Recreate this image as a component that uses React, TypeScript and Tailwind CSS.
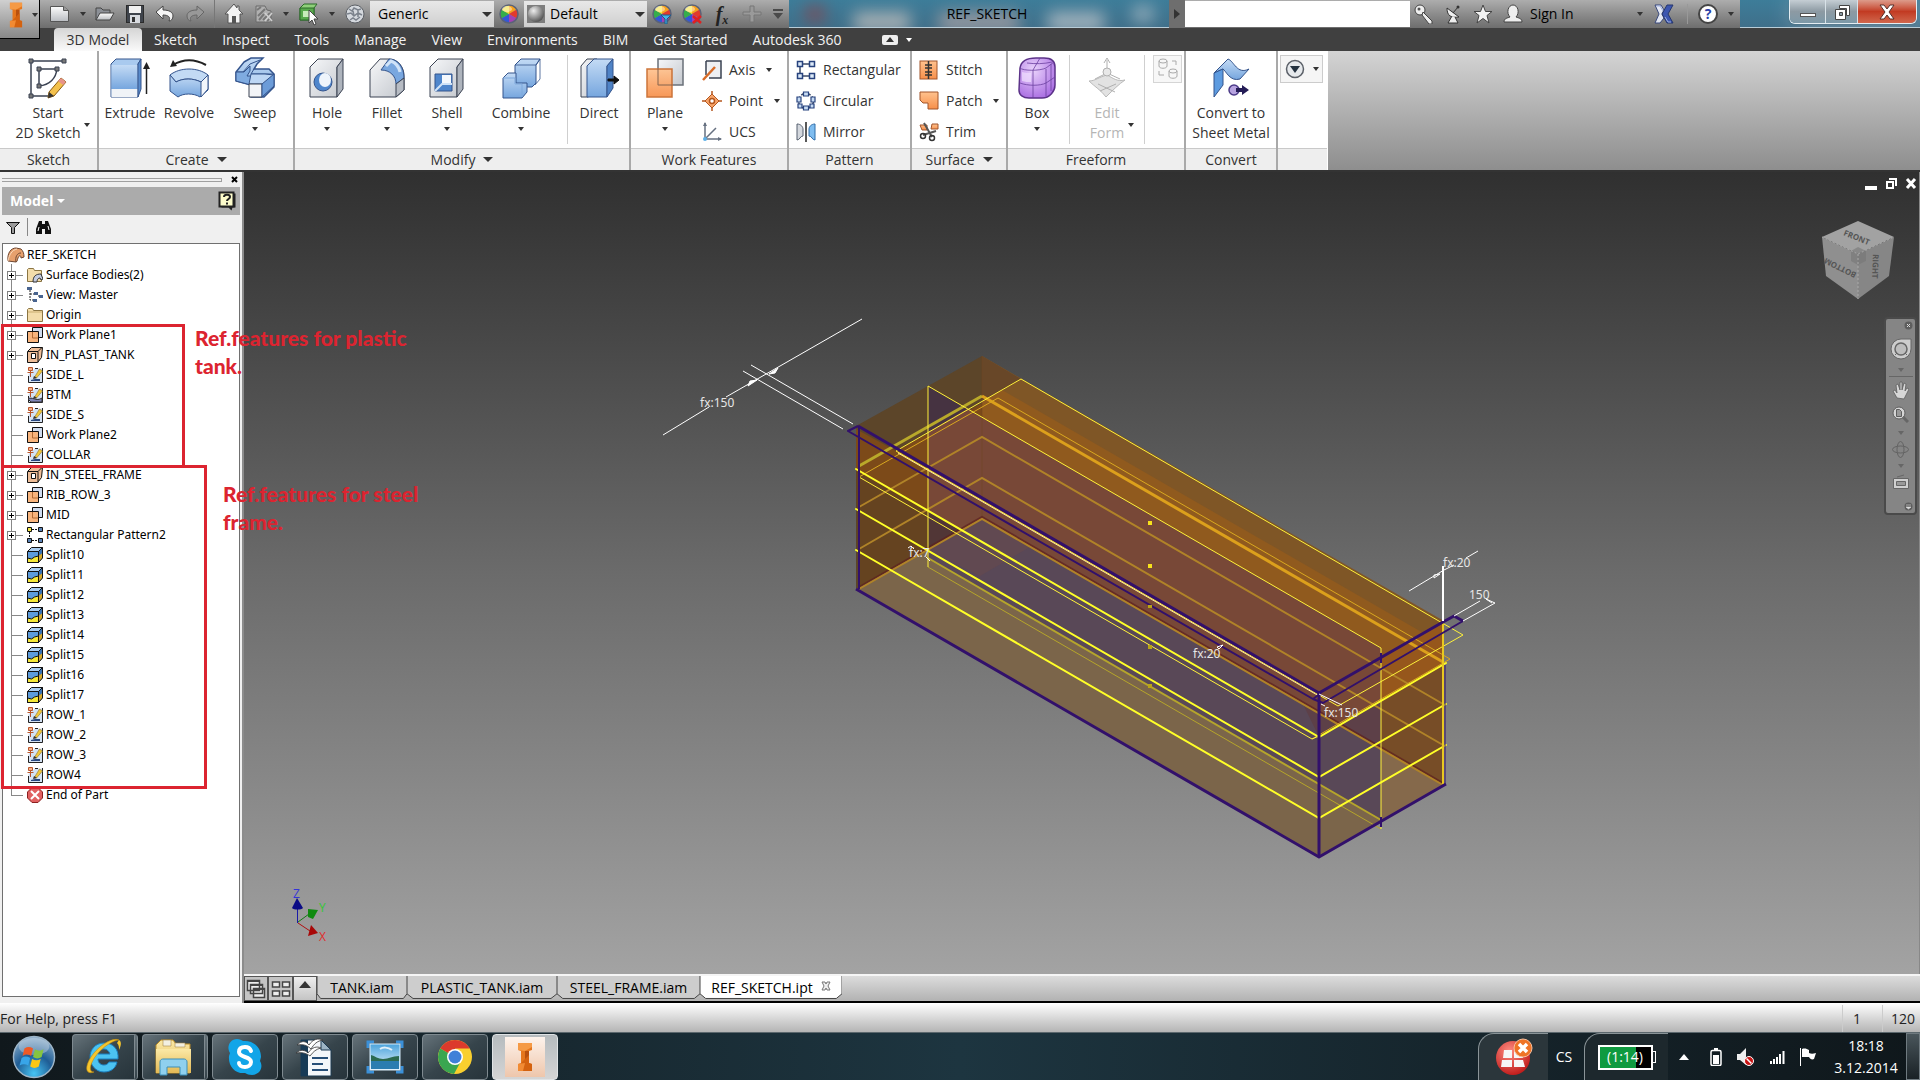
import React from "react";

type P = { children?: React.ReactNode };

const Caret = ({ c = "border-t-[#333]", big = false }: { c?: string; big?: boolean }) =>
  big ? (
    <span className={"block h-0 w-0 shrink-0 border-x-[5px] border-t-[5px] border-x-transparent " + c} />
  ) : (
    <span className={"block h-0 w-0 shrink-0 border-x-[3px] border-t-4 border-x-transparent " + c} />
  );

const Icon = ({ w = 20, h = 20, box, children }: P & { w?: number; h?: number; box?: string }) => (
  <svg width={w} height={h} viewBox={box ?? `0 0 ${w} ${h}`} fill="none" aria-hidden="true" className="shrink-0">
    {children}
  </svg>
);

/* ---------- Shared gradients ---------- */
const Defs = () => (
  <svg width="0" height="0" className="absolute" aria-hidden="true">
    <defs>
      <linearGradient id="blue" x1="0" y1="0" x2="0" y2="1">
        <stop offset="0" stopColor="#c4dbf5" />
        <stop offset="1" stopColor="#76a6de" />
      </linearGradient>
      <linearGradient id="grey" x1="0" y1="0" x2="1" y2="1">
        <stop offset="0" stopColor="#f6f7f9" />
        <stop offset="1" stopColor="#c3c7cd" />
      </linearGradient>
      <linearGradient id="orange" x1="0" y1="0" x2="0" y2="1">
        <stop offset="0" stopColor="#ffc28e" />
        <stop offset="1" stopColor="#f78f4a" />
      </linearGradient>
      <linearGradient id="silver" x1="0" y1="0" x2="0" y2="1">
        <stop offset="0" stopColor="#fdfdfd" />
        <stop offset="1" stopColor="#b9bcc1" />
      </linearGradient>
      <linearGradient id="folder" x1="0" y1="0" x2="0" y2="1">
        <stop offset="0" stopColor="#fbe9a6" />
        <stop offset="1" stopColor="#e3b955" />
      </linearGradient>
      <linearGradient id="sky" x1="0" y1="0" x2="0" y2="1">
        <stop offset="0" stopColor="#4aa3dc" />
        <stop offset="1" stopColor="#eaf6fc" />
      </linearGradient>
      <radialGradient id="ball" cx=".35" cy=".3" r=".8">
        <stop offset="0" stopColor="#ededed" />
        <stop offset=".6" stopColor="#8a8a8a" />
        <stop offset="1" stopColor="#444" />
      </radialGradient>
      <radialGradient id="orb" cx=".5" cy=".9" r=".9">
        <stop offset="0" stopColor="#46c4f4" />
        <stop offset=".5" stopColor="#1f5d95" />
        <stop offset="1" stopColor="#8fb0cc" />
      </radialGradient>
      <radialGradient id="purple" cx=".4" cy=".3" r=".8">
        <stop offset="0" stopColor="#e9d2fb" />
        <stop offset="1" stopColor="#a566e0" />
      </radialGradient>
      <radialGradient id="red" cx=".4" cy=".3" r=".8">
        <stop offset="0" stopColor="#ff8b80" />
        <stop offset="1" stopColor="#b80f0f" />
      </radialGradient>
    </defs>
  </svg>
);

/* ---------- Title bar icons ---------- */
const ILogo = ({ w, h }: { w: number; h: number }) => (
  <Icon w={w} h={h} box="2 0 16 30">
    <path d="M3 1h14v7l-3 1v12l3 1v7H3v-7l3-1V9L3 8z" fill="#e5761c" />
    <path d="M3 1h14v4l-7 4-7-1z" fill="#f59a45" />
    <path d="M10 9l4 0v12l-4 4z" fill="#b8500e" />
    <path d="M6 21l8-8v8l3 1v7H8z" fill="#d4620f" />
    <path d="M3 22l7-1-2 8H3z" fill="#f28b33" />
  </Icon>
);

const Wheel = ({ extra }: { extra?: React.ReactNode }) => (
  <Icon w={20} h={20}>
    <path d="M10 10V1a9 9 0 0 1 7.8 4.5z" fill="#f7a11c" />
    <path d="M10 10l7.8-4.5a9 9 0 0 1 0 9z" fill="#e33a2c" />
    <path d="M10 10l7.8 4.5A9 9 0 0 1 10 19z" fill="#a341b3" />
    <path d="M10 10v9a9 9 0 0 1-7.8-4.5z" fill="#3457d6" />
    <path d="M10 10l-7.8 4.5a9 9 0 0 1 0-9z" fill="#35ad4b" />
    <path d="M10 10L2.200 5.500A9 9 0 0 1 10 1z" fill="#f4e03a" />
    <circle cx="10" cy="10" r="9" stroke="#5b6378" strokeWidth="1.500" />
    <ellipse cx="8" cy="5" rx="5" ry="3" fill="#fff" opacity=".45" />
    {extra}
  </Icon>
);

const TIcon = ({ label, children, w = "w-[30px]" }: P & { label: string; w?: string }) => (
  <button type="button" aria-label={label} className={"flex h-full shrink-0 items-center justify-center " + w}>
    {children}
  </button>
);

const Glass = ({ children, cls }: P & { cls: string }) => (
  <div
    className={
      "relative h-full overflow-hidden border-b border-[#b9cdd8] bg-linear-to-b from-[#3d7d99] to-[#3f6f8a] " + cls
    }
  >
    {children}
  </div>
);

function TitleBar() {
  return (
    <header className="relative flex h-7 shrink-0 bg-linear-to-b from-[#adadad] via-[#8c8c8c] to-[#6e6e6e] text-sm">
      <button
        type="button"
        aria-label="Application menu"
        className="absolute left-0 top-0 z-10 flex h-[39px] w-10 items-center gap-2 border-b border-r border-black bg-linear-to-b from-[#d0d0d0] to-[#888] pb-2 pl-2"
      >
        <ILogo w={16} h={26} />
        <Caret />
      </button>
      <div className="flex pl-[44px]">
        <TIcon label="New" w="w-8">
          <Icon w={22} h={20}>
            <path d="M1.500 2.500h13l5 4v11h-18z" fill="url(#silver)" stroke="#555" />
            <path d="M14.500 2.500v4h5" fill="#999" stroke="#555" />
          </Icon>
        </TIcon>
        <TIcon label="New options" w="w-3.5"><Caret /></TIcon>
        <TIcon label="Open">
          <Icon w={20} h={20}>
            <path d="M1 16V4h5l2 2h7v3" fill="#8c9097" stroke="#444" />
            <path d="M1 16l4-7h14l-4 7z" fill="url(#silver)" stroke="#444" />
          </Icon>
        </TIcon>
        <TIcon label="Save">
          <Icon w={20} h={20}>
            <rect x="1.500" y="1.500" width="17" height="17" fill="#3f444c" stroke="#2b2b2b" />
            <rect x="4" y="2" width="12" height="7" fill="#f1f1f1" />
            <rect x="5" y="11" width="10" height="8" fill="#d8dbe0" />
            <rect x="7" y="13" width="3" height="5" fill="#333" />
          </Icon>
        </TIcon>
        <TIcon label="Undo">
          <Icon><path d="M1 8l7-6v4c6 0 10 2 10 6 0 3-2 5-4 5 2-4-1-6-6-6v4z" fill="#f4f4f4" stroke="#444" /></Icon>
        </TIcon>
        <TIcon label="Redo">
          <Icon><path d="M19 8l-7-6v4C6 6 2 8 2 12c0 3 2 5 4 5-2-4 1-6 6-6v4z" fill="#989898" stroke="#666" /></Icon>
        </TIcon>
        <span className="mx-1 h-full w-px bg-[#777]" />
        <TIcon label="Home">
          <Icon w={20} h={22}>
            <path d="M10 1L1 11h3v9h12v-9h3l-4-4V3h-2v2z" fill="#f3f3f3" stroke="#555" />
            <rect x="8" y="13" width="4" height="7" fill="#555" />
          </Icon>
        </TIcon>
        <TIcon label="Update" w="w-[29px]">
          <Icon>
            <path d="M2 2h9l2 4 4 1v11H2z" fill="#b0b0b0" stroke="#6b6b6b" />
            <path d="M3 6l4-3M4 12l7-7M5 16l5-6M9 16l7-7M13 17l4-4" stroke="#777" strokeWidth="2" />
            <path d="M11 9l7 8M18 9l-7 8" stroke="#cfcfcf" strokeWidth="1.500" />
          </Icon>
        </TIcon>
        <TIcon label="Update options" w="w-4"><Caret /></TIcon>
        <TIcon label="Select">
          <Icon w={20} h={24}>
            <path d="M1 6l4-4h13l-3 4v12H1z" fill="#8fd07a" stroke="#2c6b2a" />
            <path d="M1 6h14v12H1z" fill="#57a94b" stroke="#2c6b2a" />
            <rect x="4" y="9" width="8" height="6" fill="#c7ecb9" />
            <path d="M10 8v13l3-3 2 5 2-1-2-5h4z" fill="#fff" stroke="#444" />
          </Icon>
        </TIcon>
        <TIcon label="Select options" w="w-4"><Caret /></TIcon>
        <TIcon label="Material">
          <Icon>
            <circle cx="10" cy="10" r="9" fill="#d5d9de" stroke="#5c6066" />
            <path d="M4 5l3 2 2-3 4 2 3-1M2 10l4-1 3 3 4-3 4 2M5 16l3-2 3 2 4-3M8 7l1 5M13 6v7" stroke="#7b828c" strokeWidth="1.500" />
          </Icon>
        </TIcon>
      </div>
      <select aria-label="Material" className="my-px w-[124px] appearance-none bg-linear-to-b from-[#e8e8e8] to-[#cfcfcf] pl-2 text-sm text-black" defaultValue="Generic">
        <option>Generic</option>
      </select>
      <span className="-ml-3 flex w-3 items-center"><Caret big /></span>
      <TIcon label="Adjust appearance"><Wheel /></TIcon>
      <span className="my-px flex w-6 items-center justify-center bg-linear-to-b from-[#e8e8e8] to-[#cfcfcf]">
        <Icon w={18} h={18}>
          <rect width="18" height="18" fill="#7d7d7d" />
          <circle cx="9" cy="9" r="8" fill="url(#ball)" />
        </Icon>
      </span>
      <select aria-label="Appearance" className="my-px w-[99px] appearance-none bg-linear-to-b from-[#e8e8e8] to-[#cfcfcf] pl-0.5 text-sm text-black" defaultValue="Default">
        <option>Default</option>
      </select>
      <span className="-ml-3 flex w-3 items-center"><Caret big /></span>
      <TIcon label="Adjust"><Wheel extra={<path d="M9 11h10l-4 4v5h-2v-5z" fill="#46b4e8" stroke="#1c5c8a" />} /></TIcon>
      <TIcon label="Clear"><Wheel extra={<path d="M11 12l8 7M19 12l-8 7" stroke="#e02020" strokeWidth="2.500" />} /></TIcon>
      <TIcon label="Parameters">
        <span className="font-['Liberation_Serif',serif] text-xl font-bold italic text-[#222]">f<sub className="text-xs">x</sub></span>
      </TIcon>
      <TIcon label="Add">
        <Icon><path d="M8 2h4v6h7v3h-7v7H8v-7H1V8h7z" fill="#9a9a9a" stroke="#777" /></Icon>
      </TIcon>
      <TIcon label="Customize toolbar" w="w-[22px]">
        <Icon w={10} h={12}><path d="M0 1h10v2H0zM0 5h10l-5 6z" fill="#4a4a4a" /></Icon>
      </TIcon>
      <Glass cls="w-[380px]">
        <div className="absolute inset-0 flex items-center justify-between px-4 opacity-70 blur-sm" aria-hidden="true">
          <span className="h-4 w-5 bg-[#8d3f46]" />
          <span className="mt-4 h-5 w-14 bg-[#d0c9c4]" />
          <span className="mt-4 h-5 w-20 bg-[#b9a8a8]" />
          <span className="mt-4 h-5 w-14 bg-[#c8ccd0]" />
          <span className="h-4 w-5 bg-[#b7c4cc]" />
        </div>
        <div className="relative flex h-full items-center justify-center pl-4 text-sm text-black">REF_SKETCH</div>
      </Glass>
      <button type="button" aria-label="Expand search" className="flex w-4 items-center justify-center bg-[#6e6e6e]">
        <Icon w={6} h={10}><path d="M0 0l6 5-6 5z" fill="#333" /></Icon>
      </button>
      <input aria-label="Search" className="my-px min-w-0 flex-1 bg-white px-1" />
      <div className="flex w-[330px] items-center">
        <TIcon label="Subscription" w="w-7">
          <Icon>
            <circle cx="6" cy="6" r="5" fill="#eee" stroke="#444" />
            <circle cx="5" cy="5" r="1.500" fill="#555" />
            <path d="M9 8l9 9v3h-3l-7-9z" fill="#eee" stroke="#444" />
          </Icon>
        </TIcon>
        <TIcon label="Communication center">
          <Icon>
            <path d="M4 4c0 8 4 10 12 9z" fill="#eee" stroke="#333" />
            <path d="M10 9l5-6M9 12l-4 7h10l-3-6" fill="#eee" stroke="#333" />
            <circle cx="15" cy="3" r="1.500" fill="#333" />
          </Icon>
        </TIcon>
        <TIcon label="Favorites">
          <Icon><path d="M10 1l2.500 6.500H19l-5 4 2 7.500-6-4.500L4 19l2-7.500-5-4h6.500z" fill="#f2f2f2" stroke="#444" /></Icon>
        </TIcon>
        <button type="button" className="flex h-full flex-1 items-center gap-1.5 pl-1 text-sm text-black">
          <Icon w={22} h={20}>
            <path d="M2 18c0-4 4-4 6-5-4-4-2-12 3-12s7 8 3 12c2 1 6 1 6 5z" fill="#eee" stroke="#444" />
          </Icon>
          Sign In
          <span className="ml-auto pr-1.5"><Caret /></span>
        </button>
        <TIcon label="Exchange">
          <Icon>
            <path d="M1 1h6l3 5-2 4 2 4-4 5H1l4-9z" fill="#e4e8f2" stroke="#39497c" />
            <path d="M19 1h-6l-5 9 5 9h6l-5-9z" fill="#3c56b0" stroke="#26376e" />
            <path d="M3 2h3l3 5M17 18h-3l-3-5" stroke="#9fb0e0" />
          </Icon>
        </TIcon>
        <span className="ml-2 h-5 w-px bg-[#999]" />
        <button type="button" aria-label="Help" className="flex w-[52px] items-center gap-2.5 pl-2.5">
          <span className="flex h-5 w-5 shrink-0 items-center justify-center rounded-full border-2 border-[#444] bg-white text-sm font-bold leading-none text-[#2b3fa8]">?</span>
          <Caret />
        </button>
      </div>
      <Glass cls="w-[180px]">
        <div className="absolute right-0 h-full w-32 bg-[#a9b9c4] opacity-60 blur-md" aria-hidden="true" />
        <div className="relative ml-auto mr-[3px] flex h-6 w-32 overflow-hidden rounded-b-md border border-t-0 border-[#e4edf2] shadow">
          <button type="button" aria-label="Minimize" className="flex w-9 items-end justify-center border-r border-[#d8e2e8] bg-linear-to-b from-[#c5ced4] via-[#8d9aa3] to-[#7d99a8] pb-1.5">
            <span className="h-1 w-4 border border-[#555] bg-white" />
          </button>
          <button type="button" aria-label="Restore" className="flex w-8 items-center justify-center border-r border-[#d8e2e8] bg-linear-to-b from-[#c5ced4] via-[#8d9aa3] to-[#7d99a8]">
            <Icon w={18} h={18}>
              <path d="M6.500 2.500h10v10h-3v-7h-7z" fill="#fff" stroke="#444" />
              <path d="M2.500 6.500h10v10h-10zM6.500 9.500v3h3v-3z" fill="#fff" stroke="#444" fillRule="evenodd" />
            </Icon>
          </button>
          <button type="button" aria-label="Close" className="flex flex-1 items-center justify-center bg-linear-to-b from-[#dc9b8b] via-[#c23a22] to-[#d0664c]">
            <Icon w={16} h={16}><path d="M1 1h4l3 4 3-4h4l-5 7 5 7h-4l-3-4-3 4H1l5-7z" fill="#fff" stroke="#55302c" /></Icon>
          </button>
        </div>
      </Glass>
    </header>
  );
}

/* ---------- Ribbon ---------- */
const TABS = ["Sketch", "Inspect", "Tools", "Manage", "View", "Environments", "BIM", "Get Started", "Autodesk 360"];

function RibbonTabs() {
  return (
    <nav className="flex h-[23px] shrink-0 items-stretch bg-[#404040] pl-[54px] text-sm text-[#f2f2f2]">
      <button type="button" className="w-[88px] rounded-t-sm bg-linear-to-b from-[#d5d5d5] to-[#fafafa] text-[#333]">3D Model</button>
      <div className="flex gap-px">
        {TABS.map((t) => (
          <button type="button" key={t} className="px-3">{t}</button>
        ))}
      </div>
      <button type="button" aria-label="Minimize ribbon" className="ml-7 flex items-center gap-2">
        <span className="flex h-[10px] w-4 items-center justify-center rounded-xs bg-[#eee]">
          <Icon w={8} h={5}><path d="M0 5l4-5 4 5z" fill="#333" /></Icon>
        </span>
        <Caret c="border-t-white" />
      </button>
    </nav>
  );
}

const Panel = ({ title, w, arrow, children }: P & { title: string; w: string; arrow?: boolean }) => (
  <section className={"flex shrink-0 flex-col border-r-2 border-[#a9a9a9] bg-white " + w}>
    <div className="flex h-[97px] items-stretch">{children}</div>
    <h2 className="flex flex-1 items-center justify-center gap-2 border-t border-[#c9c9c9] bg-[#eeeeee] text-sm text-[#333]">
      {title}
      {arrow && <Caret big />}
    </h2>
  </section>
);

const Big = ({ w, lines, arrow, side, off, children }: P & { w: string; lines: string[]; arrow?: boolean; side?: boolean; off?: boolean }) => (
  <button type="button" disabled={off} className={"flex shrink-0 flex-col items-center pt-1.5 text-sm leading-5 " + w + (off ? " text-[#b5b5b5]" : " text-[#333]")}>
    {children}
    <span className="mt-1 flex flex-col items-center">
      {lines.map((l, i) => (
        <span key={l} className="relative whitespace-nowrap">
          {l}
          {side && i === lines.length - 1 && (
            <span className="absolute -right-2.5 top-0"><Caret /></span>
          )}
        </span>
      ))}
    </span>
    {arrow && <span className="mt-1"><Caret /></span>}
  </button>
);

const Row = ({ label, arrow, children }: P & { label: string; arrow?: boolean }) => (
  <button type="button" className="flex h-[31px] items-center gap-[7px] whitespace-nowrap text-left text-sm text-[#333]">
    {children}
    {label}
    {arrow && <span className="pl-1"><Caret /></span>}
  </button>
);

const Sep = () => <span className="my-1 w-px shrink-0 bg-[#cfcfcf]" />;

function Ribbon() {
  const ol = "#34548c";
  const dk = "#3a4252";
  return (
    <div className="flex h-[121px] shrink-0 border-b-2 border-[#333] bg-linear-to-b from-[#d4d4d4] to-[#8e8e8e]">
      <Panel title="Sketch" w="w-[99px]">
        <Big w="w-24" lines={["Start", "2D Sketch"]} side>
          <Icon w={40} h={42}>
            <path d="M3 39V4h33M3 39h18" stroke={dk} strokeWidth="1.500" />
            <path d="M11 29V12h18c-1 9-7 16-18 17z" stroke={dk} strokeWidth="1.500" />
            <path d="M1 2h4v4H1zM34 2h4v4h-4zM1 37h4v4H1zM9 10h4v4H9zM27 10h4v4h-4zM9 27h4v4H9z" fill="#777" stroke={dk} />
            <path d="M33 21l5 4-12 14-6 2 1-6z" fill="#f4c14c" stroke="#8a5b12" />
            <path d="M33 21l5 4-3 3-5-4z" fill="#e7938a" />
            <path d="M20 41l1-6 5 4z" fill="#333" />
          </Icon>
        </Big>
      </Panel>
      <Panel title="Create" w="w-[196px]" arrow>
        <Big w="w-[62px]" lines={["Extrude"]}>
          <Icon w={40} h={42}>
            <path d="M1 7l5-5h25l-3 5v33H1z" fill="#a9caef" stroke={ol} />
            <path d="M1.500 8h26v24h-26z" fill="url(#blue)" />
            <path d="M1.500 32h26v8h-26z" fill="#f0f3f7" />
            <path d="M28 7l3-5v30l-3 8z" fill="#5a8ccc" stroke={ol} />
            <path d="M36.500 37V10" stroke="#222" strokeWidth="1.500" />
            <path d="M33 12l3.500-7 3.500 7z" fill="#222" />
          </Icon>
        </Big>
        <Big w="w-14" lines={["Revolve"]}>
          <Icon w={40} h={42}>
            <path d="M4 8C14 2 26 2 37 8" stroke="#222" strokeWidth="2" />
            <path d="M1 10l3-7 4 6z" fill="#222" />
            <path d="M1 18c10-8 28-8 38 0l-7 7c-8-4-18-4-25 0z" fill="#c2daf4" stroke={ol} />
            <path d="M1 18l6 7c7-4 17-4 25 0l7-7v15l-8 7c-6-4-17-4-22 0l-8-6z" fill="url(#blue)" stroke={ol} />
            <path d="M32 25l7-7v14l-7 8z" fill="#f2f6fb" stroke={ol} />
          </Icon>
        </Big>
        <Big w="w-[76px]" lines={["Sweep"]} arrow>
          <Icon w={40} h={42}>
            <path d="M9 5l7-4h12l-6 6-3 5h15l5 5v13l-10 10H16V28L1 24V15z" fill="url(#blue)" stroke={ol} strokeWidth="1.500" />
            <path d="M1 15h7l7-8 10-4M19 12l-3 5h14l9 0" stroke={ol} />
            <path d="M1 15h8l6-6v5l-3 5 4 0v9L1 24z" fill="#7fabe0" stroke={ol} />
            <path d="M16 17h14l9 1-9 9H14z" fill="#bcd6f4" stroke={ol} />
            <path d="M14 27h13v13H14z" fill="#f2f4f7" stroke={dk} />
            <path d="M27 27l12-10v12L27 40z" fill="#6c9cd8" stroke={ol} />
          </Icon>
        </Big>
      </Panel>
      <Panel title="Modify" w="w-[336px]" arrow>
        <Big w="w-16" lines={["Hole"]} arrow>
          <Icon w={38} h={42}>
            <path d="M2 10l8-8h25l-6 8v30H2z" fill="url(#grey)" stroke={dk} />
            <path d="M29 10l6-8v30l-6 8z" fill="#aeb4bd" stroke={dk} />
            <circle cx="15" cy="25" r="9" fill="#4f86cc" stroke={ol} />
            <ellipse cx="17" cy="23" rx="6" ry="7" fill="#eef4fb" />
          </Icon>
        </Big>
        <Big w="w-14" lines={["Fillet"]} arrow>
          <Icon w={38} h={42}>
            <path d="M2 13l10-11h9c9 0 15 8 15 17v14l-8 7H2z" fill="url(#grey)" stroke={dk} />
            <path d="M13 13l8-11c9 0 15 8 15 19l-8 6c0-8-6-14-15-14z" fill="#79a7df" stroke={ol} />
            <path d="M18 9l5-5c5 2 8 6 9 11" stroke="#d0e3f8" strokeWidth="3" />
            <path d="M28 27l8-6v12l-8 7z" fill="#b7bcc4" stroke={dk} />
          </Icon>
        </Big>
        <Big w="w-16" lines={["Shell"]} arrow>
          <Icon w={38} h={42}>
            <path d="M2 10l8-8h25l-6 8v30H2z" fill="url(#grey)" stroke={dk} />
            <path d="M29 10l6-8v30l-6 8z" fill="#aeb4bd" stroke={dk} />
            <path d="M7 17h17v17H7z" fill="#4f86cc" stroke={ol} />
            <path d="M14 18h9v9h-9z" fill="#f4f8fd" />
            <path d="M7 34l7-7h10" stroke="#cfe2f7" strokeWidth="2" />
          </Icon>
        </Big>
        <Big w="w-[84px]" lines={["Combine"]} arrow>
          <Icon w={40} h={42}>
            <path d="M14 8l6-6h19l-4 6v18l-4 4H14z" fill="url(#blue)" stroke={ol} />
            <path d="M14 8h21l4-6v20l-5 6" stroke={ol} strokeWidth=".8" />
            <path d="M2 21l5-5h8v10h11v9l-5 6H2z" fill="url(#blue)" stroke={ol} strokeWidth="1" />
            <path d="M2 21h12v6h7v13" stroke="#7fa9dc" />
          </Icon>
        </Big>
        <span className="w-2" />
        <Sep />
        <span className="w-0.5" />
        <Big w="w-[60px]" lines={["Direct"]}>
          <Icon w={42} h={42}>
            <path d="M3 9l6-7h10v32l-9 6H3z" fill="url(#grey)" stroke={dk} />
            <path d="M9 9l7-7h19l-6 7v31H9z" fill="url(#blue)" stroke={ol} />
            <path d="M29 9l6-7v29l-6 9z" fill="#4f83c6" stroke={ol} />
            <path d="M30 22h6v-3l5 4-5 4v-3h-6z" fill="#111" stroke="#111" />
          </Icon>
        </Big>
      </Panel>
      <Panel title="Work Features" w="w-[158px]">
        <Big w="w-[68px]" lines={["Plane"]} arrow>
          <Icon w={40} h={42}>
            <rect x="13" y="2" width="25" height="26" fill="url(#grey)" stroke="#6a7079" strokeWidth="1.500" />
            <rect x="2" y="12" width="25" height="28" fill="url(#orange)" stroke="#c9692a" strokeWidth="1.500" opacity=".92" />
            <path d="M13 12v16h14" stroke="#8c6a55" />
          </Icon>
        </Big>
        <div className="flex flex-col pl-[3px] pt-[3px]">
          <Row label="Axis" arrow>
            <Icon w={20} h={22}>
              <path d="M4 2h15v17H7" fill="#eef0f3" stroke={dk} strokeWidth="1.500" />
              <path d="M4 2v14" stroke={dk} strokeWidth="1.500" />
              <path d="M1 21L13 8" stroke="#d76c28" strokeWidth="2.500" />
            </Icon>
          </Row>
          <Row label="Point" arrow>
            <Icon w={20} h={20}>
              <path d="M10 0v20M0 10h20" stroke="#b5571f" strokeWidth="1.500" />
              <path d="M10 3l7 7-7 7-7-7z" fill="#f7a46a" stroke="#b5571f" />
              <circle cx="10" cy="10" r="2.500" fill="#fff" stroke="#b5571f" strokeWidth="1.500" />
            </Icon>
          </Row>
          <Row label="UCS">
            <Icon w={20} h={20}>
              <path d="M3 1v16h16M3 17L14 6" stroke="#667080" strokeWidth="1.500" />
              <path d="M1 4l2-4 2 4zM16 15l4 2-4 2z" fill="#667080" />
              <circle cx="3" cy="17" r="2" fill="#5db0e8" />
            </Icon>
          </Row>
        </div>
      </Panel>
      <Panel title="Pattern" w="w-[123px]">
        <div className="flex flex-col pl-[7px] pt-[3px]">
          <Row label="Rectangular">
            <Icon w={20} h={20}>
              <path d="M7 4h6M7 16h6M4 7v6" stroke="#3b4a68" strokeWidth="1.500" />
              <path d="M1.500 1.500h5v5h-5zM13.500 1.500h5v5h-5zM1.500 13.500h5v5h-5zM13.500 13.500h5v5h-5z" fill="#dceaf9" stroke="#27427e" strokeWidth="1.500" />
            </Icon>
          </Row>
          <Row label="Circular">
            <Icon w={20} h={20}>
              <circle cx="10" cy="10" r="7.500" stroke="#3b4a68" strokeWidth="1.500" strokeDasharray="4 2" />
              <path d="M7.500 1h5v4h-5zM7.500 15h5v4h-5zM1 6h4v5H1zM15 6h4v5h-4zM2 13h4v4H2zM14 13h4v4h-4z" fill="#c6dbf3" stroke="#27427e" strokeWidth="1.200" />
            </Icon>
          </Row>
          <Row label="Mirror">
            <Icon w={20} h={20}>
              <path d="M1 2c4 0 6 3 6 5v7c-3 0-3 4-6 4z" fill="#d4d8de" stroke="#555f6e" />
              <path d="M19 2c-4 0-6 3-6 5v7c3 0 3 4 6 4z" fill="#7fbdf0" stroke="#2f6ca8" />
              <path d="M10 0v20" stroke="#222" strokeWidth="1.500" />
            </Icon>
          </Row>
        </div>
      </Panel>
      <Panel title="Surface" w="w-[96px]" arrow>
        <div className="flex flex-col pl-[7px] pt-[3px]">
          <Row label="Stitch">
            <Icon w={20} h={20}>
              <rect x="1" y="1" width="17" height="18" fill="url(#orange)" stroke="#a2552a" />
              <path d="M9.500 1v18M6 5h7M6 8h7M6 12h7M6 15h7" stroke="#333" strokeWidth="1.500" />
            </Icon>
          </Row>
          <Row label="Patch" arrow>
            <Icon w={20} h={20}><path d="M1 1h18v17H9v-6H4l-3-3z" fill="url(#orange)" stroke="#a2552a" /></Icon>
          </Row>
          <Row label="Trim">
            <Icon w={20} h={20}>
              <path d="M1 3h7v5H3zM13 2h6v5h-7z" fill="url(#orange)" stroke="#a2552a" />
              <path d="M5 1l8 14M17 9L4 13" stroke="#555" strokeWidth="2" />
              <circle cx="13" cy="16" r="2.500" stroke="#333" strokeWidth="1.500" />
              <circle cx="4" cy="14" r="2.500" stroke="#333" strokeWidth="1.500" />
            </Icon>
          </Row>
        </div>
      </Panel>
      <Panel title="Freeform" w="w-[178px]">
        <Big w="w-[58px]" lines={["Box"]} arrow>
          <Icon w={40} h={42}>
            <path d="M3 11C4 4 10 1 19 1h8c7 0 11 3 11 9v18c0 6-5 13-13 13H12c-6 0-10-3-10-8z" fill="url(#purple)" stroke="#5c3389" strokeWidth="1.500" />
            <path d="M3 11c3 3 20 3 26 0l8-6M29 12v27M16 13v28M3 26c8 3 20 3 26 0l9-6M16 13L23 1M34 7v27M10 6c8 1 17 1 25-1" stroke="#6b3fa0" strokeWidth=".8" />
            <path d="M5 15c3 1 6 1 9 1v9c-3 0-6 0-9-1z" fill="#f0defd" opacity=".7" />
          </Icon>
        </Big>
        <span className="w-[3px]" />
        <Sep />
        <Big w="w-[74px]" lines={["Edit", "Form"]} side off>
          <Icon w={40} h={42}>
            <path d="M2 24c6 0 10-4 18-6 6 3 10 7 18 5-6 4-12 10-19 17C14 33 8 30 2 24z" fill="#e2e2e2" stroke="#b9b9b9" />
            <path d="M20 16V3M17 6l3-5 3 5M20 16l-12 6M20 16l13 6M11 27l17 8M29 27L13 34" stroke="#b0b0b0" />
            <circle cx="20" cy="15" r="4" fill="#e8e8e8" stroke="#b0b0b0" />
          </Icon>
        </Big>
        <Sep />
        <button type="button" disabled aria-label="Convert form" className="ml-2 mt-1 flex h-7 w-[29px] items-center justify-center border border-[#d5d5d5] bg-[#f7f7f7]">
          <Icon w={24} h={24}>
            <ellipse cx="7" cy="4" rx="4" ry="2" stroke="#aaa" /><path d="M3 4v5c0 3 8 3 8 0V4" stroke="#aaa" />
            <ellipse cx="17" cy="14" rx="4" ry="2" stroke="#aaa" /><path d="M13 14v5c0 3 8 3 8 0v-5M3 14v4h5M20 8V4h-4" stroke="#aaa" />
          </Icon>
        </button>
      </Panel>
      <Panel title="Convert" w="w-[92px]">
        <Big w="w-[90px]" lines={["Convert to", "Sheet Metal"]}>
          <Icon w={42} h={42}>
            <path d="M4 16L18 2c6 2 9 16 21 10l-9 10C20 25 16 14 13 12z" fill="url(#blue)" stroke={ol} />
            <path d="M4 16l9-4v16L4 40z" fill="#5d9be0" stroke={ol} />
            <circle cx="24" cy="33" r="5" fill="#b7a3e0" stroke="#4b3a87" strokeWidth="1.500" />
            <path d="M26 31h6v-3l7 5-7 5v-3h-6z" fill="#241c56" />
          </Icon>
        </Big>
      </Panel>
      <div className="flex w-[50px] flex-col border-r border-white bg-white">
        <div className="h-[97px] pl-0.5 pt-1">
          <button type="button" aria-label="Ribbon options" className="flex h-7 w-[43px] items-center justify-center gap-2 border border-[#ccc] bg-[#f5f5f5]">
            <Icon w={20} h={20}>
              <circle cx="10" cy="10" r="8.500" fill="#e6e9ec" stroke="#5b6068" strokeWidth="1.500" />
              <path d="M5 7h10l-5 7z" fill="#243240" />
            </Icon>
            <Caret />
          </button>
        </div>
        <div className="flex-1 border-t border-[#c9c9c9] bg-[#eeeeee]" />
      </div>
    </div>
  );
}

/* ---------- Model browser ---------- */
type Kind = "bodies" | "view" | "folder" | "plane" | "box" | "sketch" | "shared" | "pattern" | "split" | "end";

const NodeIcon = ({ k }: { k: Kind }) => {
  switch (k) {
    case "bodies":
      return <Icon w={16} h={16}><path d="M.5 14.500v-12l1-1h5l1 2h7v11z" fill="#f3dcaa" stroke="#8b7543" /><path d="M6 15c0-6 3-8 8-8l2 5-2 1-1-2c-3 0-3 4-3 4z" fill="#c4cbe0" stroke="#333" /></Icon>;
    case "view":
      return <Icon w={16} h={16}><path d="M3 3v10h4M3 7h5M11 9h4M8 13h3" stroke="#222" strokeDasharray="2 1" /><path d="M0 0h5v3H0zM7 5h4v3H7zM12 8h4v3h-4zM6 12h4v3H6z" fill="#49648f" /></Icon>;
    case "folder":
      return <Icon w={16} h={16}><path d="M.5 14.500v-12l1-1h4l1 2h9v11z" fill="#f3dcaa" stroke="#8b7543" /><path d="M1 5h14" stroke="#c9ad70" /></Icon>;
    case "plane":
      return <Icon w={16} h={16}><path d="M5.500.5h10v10h-10z" fill="#cfdcf0" stroke="#111" /><path d="M.5 4.500h11v11H.5z" fill="#f9b57d" stroke="#111" /><path d="M5.500 5v6H11" stroke="#b36a35" /></Icon>;
    case "box":
      return <Icon w={16} h={16}><path d="M.5 4.500l4-4h11l-1 10-4 5H.5z" fill="#edbd98" stroke="#111" /><path d="M1 4.500h10v11M11 4.500l4-4" stroke="#111" /><path d="M4.500 6.500h4v5h-4z" fill="#fff" stroke="#111" /></Icon>;
    case "sketch":
    case "shared":
      return (
        <Icon w={16} h={16}>
          <path d="M1.500 7v8.500h14V1.500H8z" fill="#d4e2f4" />
          <path d="M1.500 9v6.500h14V1M8 1.500h3" stroke="#222" />
          <path d="M4 13l4-1h5v2H4z" fill="#28477f" />
          <path d="M7 11L12.500 2l3 2-6 7z" fill="#f1c63a" stroke="#8a7430" strokeWidth=".6" />
          <path d="M6 12l1-3 3 2z" fill="#333" />
          <path d="M1.500.5h4v3h-4zM.5 5.500h6M3.500 4v6" stroke="#b8552b" />
          <path d="M2 1h3v2H2z" fill="#f4b48e" />
          {k === "shared" && <path d="M1 12c4-3 8 3 14-1v4H4z" fill="#8187b8" stroke="#333" />}
        </Icon>
      );
    case "pattern":
      return <Icon w={16} h={16}><path d="M2.500 5v6M5 2.500h6M5 13.500h6" stroke="#111" strokeDasharray="2 1" /><path d="M.5.500h4v4h-4z" fill="#f2e84a" stroke="#111" /><path d="M11.500.500h4v4h-4zM.5 11.500h4v4h-4zM11.500 11.500h4v4h-4z" fill="#5b83b8" stroke="#111" /></Icon>;
    case "split":
      return (
        <Icon w={16} h={16}>
          <path d="M.5 4.500l4-4h11l-4 4z" fill="#a9cdf2" stroke="#111" />
          <path d="M.5 4.500h11v11H.5z" fill="#5c9bdc" />
          <path d="M.5 11l4 1 3-2 4-1v6.500H.5z" fill="#f5e83a" stroke="#111" />
          <path d="M11.500 4.500l4-4V11l-4 4.500z" fill="#3a73b4" />
          <path d="M11.500 9l4-3v5l-4 4.500z" fill="#d9a92a" />
          <path d="M.5 4.500h11v11H.5zM11.500 4.500l4-4V11l-4 4.500" stroke="#111" />
        </Icon>
      );
    default:
      return <Icon w={16} h={16}><path d="M5 .5h6L15.500 5v6L11 15.500H5L.5 11V5z" fill="#e06060" stroke="#8c2020" /><path d="M4 4l8 8M12 4l-8 8" stroke="#fff" strokeWidth="2" /></Icon>;
  }
};

const NODES: [string, Kind, boolean?][] = [
  ["Surface Bodies(2)", "bodies", true],
  ["View: Master", "view", true],
  ["Origin", "folder", true],
  ["Work Plane1", "plane", true],
  ["IN_PLAST_TANK", "box", true],
  ["SIDE_L", "sketch"],
  ["BTM", "shared"],
  ["SIDE_S", "sketch"],
  ["Work Plane2", "plane"],
  ["COLLAR", "sketch"],
  ["IN_STEEL_FRAME", "box", true],
  ["RIB_ROW_3", "plane", true],
  ["MID", "plane", true],
  ["Rectangular Pattern2", "pattern", true],
  ["Split10", "split"],
  ["Split11", "split"],
  ["Split12", "split"],
  ["Split13", "split"],
  ["Split14", "split"],
  ["Split15", "split"],
  ["Split16", "split"],
  ["Split17", "split"],
  ["ROW_1", "sketch"],
  ["ROW_2", "sketch"],
  ["ROW_3", "sketch"],
  ["ROW4", "sketch"],
  ["End of Part", "end"],
];

function Browser() {
  return (
    <aside className="flex w-[244px] shrink-0 flex-col border-r-2 border-[#8c8c8c] bg-[#f0f0f0] pb-1.5 pl-0.5 pr-0.5 font-['Noto_Sans',sans-serif]">
      <div className="flex h-[15px] shrink-0 items-center gap-1.5">
        <span className="h-1 flex-1 border-y border-r border-[#a0a0a0]" />
        <button type="button" aria-label="Close browser" className="flex w-3 justify-center">
          <Icon w={7} h={7}><path d="M1 1l5 5M6 1L1 6" stroke="#000" strokeWidth="2" /></Icon>
        </button>
      </div>
      <div className="flex h-7 shrink-0 items-center bg-[#ababab] pl-2 pr-1">
        <button type="button" className="flex items-center gap-1 text-sm font-bold text-white">
          Model
          <Icon w={8} h={4}><path d="M0 0h8L4 4z" fill="#fff" /></Icon>
        </button>
        <button type="button" aria-label="Browser help" className="ml-auto">
          <Icon w={18} h={20}>
            <path d="M3.500 2.500h14v14h-3l-1 3-3-3h-7z" fill="#222" />
            <path d="M1.500 1.500h14v14h-14z" fill="#fdfccb" stroke="#222" strokeWidth="2" />
            <path d="M6 6c0-3 6-3 6 0 0 2-3 2-3 4M9 11.500v2" stroke="#222" strokeWidth="2" />
          </Icon>
        </button>
      </div>
      <div className="flex h-7 shrink-0 items-center pb-1 pl-1">
        <button type="button" aria-label="Filter"><Icon w={14} h={13}><path d="M.5 1.500h13l-5 5v6h-3v-6z" fill="#9a9a9a" stroke="#111" /></Icon></button>
        <span className="ml-[7px] h-[18px] w-px bg-[#888]" />
        <button type="button" aria-label="Find" className="ml-2">
          <Icon w={15} h={14}>
            <path d="M3 1h3v3h3V1h3l3 8v5H9V9H6v5H0V9z" fill="#111" />
            <path d="M3 7l-1 4M12 6l1 4" stroke="#fff" />
          </Icon>
        </button>
      </div>
      <div className="relative min-h-0 flex-1 border border-[#707070] bg-white pt-px text-xs text-black">
        <span className="absolute left-2 top-5 h-[532px] w-px bg-[#888]" />
        <ul className="relative">
          <li className="flex h-5 items-center gap-0.5 pl-1">
            <Icon w={18} h={16}>
              <path d="M1 14C0 6 4 1 9 1l5 1c2 2 3 4 3 8l-3 1c0-3-2-3-3 0-1 2 0 3-2 4z" fill="#e6a06d" stroke="#6e4630" />
              <path d="M1 14C2 8 5 3 10 2" stroke="#f9dcc0" />
              <path d="M9 15c-1-5 1-9 5-9" stroke="#6e4630" />
            </Icon>
            REF_SKETCH
          </li>
          {NODES.map(([n, k, ex]) => (
            <li key={n} className="flex h-5 items-center pl-1">
              {ex ? (
                <button type="button" aria-label={"Expand " + n} className="flex h-[9px] w-[9px] items-center justify-center border border-[#808080] bg-white">
                  <Icon w={5} h={5}><path d="M0 2.500h5M2.500 0v5" stroke="#000" /></Icon>
                </button>
              ) : (
                <span className="ml-1 h-px w-[5px] bg-[#888]" />
              )}
              <span className="mr-1 h-px w-[7px] bg-[#888]" />
              <NodeIcon k={k} />
              <span className="pl-[3px]">{n}</span>
            </li>
          ))}
        </ul>
      </div>
    </aside>
  );
}

/* ---------- Graphics view ---------- */
const Scene = () => (
  <svg viewBox="244 171 1675 802" className="absolute inset-0 h-full w-full" fill="none" role="img" aria-label="Part model">
    {/* walls and floor */}
    <path d="M856 425L982 355V518L856 588z" fill="#5c4529" />
    <path d="M982 355L1444 620V784L982 518z" fill="#7f5626" />
    <path d="M982 355L1021 378 982 402z" fill="#684728" />
    <path d="M856 588L982 518 1444 784 1319 856z" fill="#7b654a" />
    <path d="M856 428L896 450 982 402V542L856 470z" fill="#7c4a19" />
    <path d="M856 470L982 542 982 518 859 588z" fill="#654320" />
    <path d="M982 400L1002 389 1444 644V784L982 518z" fill="#905a1e" />
    <path d="M856 588L982 518 1444 784 1319 856z" fill="#7b654a" />

    {/* mid plane */}
    <path d="M928 385L967 408 928 431z" fill="#463341" />
    <path d="M928 431L967 408 1381 647V748L982 518 928 549z" fill="#784837" />
    <path d="M928 510L962 530 928 549z" fill="#513636" />
    <path d="M928 549L982 518 1381 748V819L928 557z" fill="#594857" />
    <path d="M928 549L982 518 1030 546 980 575z" fill="#6a4a4c" fillOpacity=".5" />

    {/* right end */}
    <path d="M1381 656L1444 620V663L1381 700z" fill="#96571c" />
    <path d="M1381 700L1444 663V784L1381 748z" fill="#774d27" />
    <path d="M1319 736L1381 700V748L1303 703z" fill="#5d4048" />
    <path d="M1381 748L1444 784 1381 820z" fill="#85694b" />

    <path d="M982 355V518" stroke="#6d4420" strokeOpacity=".5" />
    <path d="M859 586L982 516 1443 782" stroke="#5c2020" strokeWidth="2" strokeOpacity=".7" />

    {/* hidden edges */}
    <g stroke="#b08328" strokeWidth="2">
      <path d="M859 506L982 436 1443 703" />
      <path d="M859 548L982 477 1443 744" />
      <path d="M859 588L982 518 1443 784" />
      <path d="M928 557L1381 819" stroke="#b5a52b" />
    </g>
    <path d="M859 465L982 395" stroke="#b9a92a" strokeWidth="3" />
    <path d="M982 395L1443 661" stroke="#dca01c" strokeWidth="3" />
    <path d="M1312 738L1450 658 998 397 859 476" stroke="#d9a820" />
    <path d="M928 566L1381 828" stroke="#b5a52b" />

    {/* work planes */}
    <path d="M928 566V385L1381 647V828" stroke="#fff23a" />
    <path d="M1021 378L1463 634 1338 705 896 450z" stroke="#fff23a" />
    <path d="M859 476L1312 738 1319 735" stroke="#fff23a" />
    <path d="M898 452L1319 695" stroke="#ffe9a0" />

    {/* splits */}
    <g stroke="#ffff28" strokeWidth="2" strokeLinecap="round">
      <path d="M856 468L1319 736 1446 662" />
      <path d="M856 508L1319 776 1446 703" />
      <path d="M856 549L1319 817 1446 744" />
    </g>
    <path d="M1443 622V783" stroke="#e8c820" strokeWidth="2" />

    {/* outer profile */}
    <g stroke="#32106b" strokeLinejoin="round">
      <path d="M856 588L1319 856 1446 783" strokeWidth="3" />
      <path d="M859 425V588" strokeWidth="2" />
      <path d="M1319 692V856" strokeWidth="3" />
      <path d="M858 425L1319 692 1443 621 1454 615 1463 620" strokeWidth="3" />
      <path d="M858 425L848 430 1313 698 1323 702 1463 620M1313 698L1321 692" strokeWidth="2" />
      <path d="M1381 652V662M1381 816V826" strokeWidth="2" />
      <path d="M1445 664V783" strokeWidth="1" />
    </g>

    <path d="M1148 520h4v4h-4zM1148 563h4v4h-4z" fill="#f7e21c" />
    <path d="M1148 604h4v3h-4zM1148 644h4v4h-4zM1148 683h4v4h-4z" fill="#b9a516" />

    {/* dimensions */}
    <g stroke="#fff">
      <path d="M663 434L709 406M726 396L862 318M743 370L843 428M751 364L853 423" />
      <path d="M757 379l-9 6 2-5zM769 373l9-6-3 5z" fill="#fff" />
      <path d="M1443 565V620" strokeWidth="2" />
      <path d="M1409 590L1444 569 1454 564M1466 557L1478 550M1434 574l6-1-6 4zM1454 615L1480 600M1463 620L1495 602 1486 598 1492 602" />
      <path d="M908 547l3-2 3 3M926 556l4 4M1217 646l6-2-4 4zM1319 693L1342 704M1325 705l-4-2" />
    </g>
    <g fill="#e6e6e6" className="font-['Noto_Sans',sans-serif] text-xs">
      <text x="700" y="406">fx:150</text>
      <text x="909" y="556">fx:7</text>
      <text x="1193" y="657">fx:20</text>
      <text x="1324" y="716">fx:150</text>
      <text x="1443" y="566">fx:20</text>
      <text x="1469" y="598">150</text>
    </g>

    {/* axis triad */}
    <path d="M297.500 922V905" stroke="#1a1aa8" />
    <path d="M292 907l5-10 6 10c-2 2-9 2-11 0z" fill="#0b0b85" />
    <path d="M298 921l11-8" stroke="#157a15" />
    <path d="M308 908l10 1-5 9-5-2z" fill="#0f8a0f" />
    <path d="M298 922l12 8" stroke="#b01010" />
    <path d="M311 924l7 8-10 3z" fill="#a80808" />
    <g className="font-['Open_Sans',sans-serif] text-xs">
      <text x="293" y="897" fill="#3434d8">Z</text>
      <text x="319" y="911" fill="#35c735">Y</text>
      <text x="319" y="940" fill="#e02c2c">X</text>
    </g>
  </svg>
);

const ViewCube = () => (
  <div className="absolute right-6 top-12">
    <svg width="74" height="80" viewBox="0 0 74 80" fill="none" role="img" aria-label="View cube">
      <path d="M37 1l36 16-36 17L1 17z" fill="#a2a2a2" />
      <path d="M1 17l36 17v45L5 56z" fill="#8f8f8f" />
      <path d="M73 17L37 34v45l31-23z" fill="#868686" />
      <path d="M30 31l7-4 8 4v10l-8 4-7-4z" fill="#777" opacity=".6" />
      <path d="M37 34v45M1 17l36 17 36-17" stroke="#a9a9a9" strokeDasharray="2 2" />
      <g className="font-['Open_Sans',sans-serif] text-[8px] font-bold" fill="#555">
        <text transform="translate(22 15) rotate(22)">FRONT</text>
        <text transform="translate(36 53) rotate(206)">BOTTOM</text>
        <text transform="translate(52 34) rotate(92)">RIGHT</text>
      </g>
    </svg>
  </div>
);

const NavBar = () => (
  <div className="absolute right-0.5 top-[145px] flex h-[198px] w-[33px] flex-col items-center rounded border-2 border-[#4a4a4a] bg-[#858585]">
    <button type="button" aria-label="Close navigation bar" className="mr-0.5 mt-0.5 self-end">
      <Icon w={9} h={9}><circle cx="4.500" cy="4.500" r="4" fill="#5e5e5e" /><path d="M3 3l3 3M6 3L3 6" stroke="#ddd" /></Icon>
    </button>
    <button type="button" aria-label="Steering wheel" className="mt-2">
      <Icon w={22} h={22}>
        <path d="M11 1h10v10a10 10 0 1 1-10-10z" fill="#cdcdcd" stroke="#666" />
        <circle cx="11" cy="11" r="6" fill="#bdbdbd" stroke="#666" strokeWidth="1.500" />
        <path d="M5 17l2-2M17 17l-2-2" stroke="#666" />
      </Icon>
    </button>
    <span className="mt-2"><Caret c="border-t-[#666]" /></span>
    <span className="my-1 h-px w-6 shrink-0 bg-[#666]" />
    <button type="button" aria-label="Pan">
      <Icon w={17} h={19}>
        <path d="M5 17l-4-7 2-1 2 3-1-8 2-1 2 6V1h2v8l2-7 2 1-1 7 2-3 2 1-4 8-1 2z" fill="#d6d6d6" stroke="#5e5e5e" strokeWidth=".8" />
      </Icon>
    </button>
    <button type="button" aria-label="Zoom" className="mt-1.5">
      <Icon w={17} h={17}>
        <path d="M11 11l5 5" stroke="#666" strokeWidth="3" />
        <circle cx="7" cy="7" r="6" fill="#d6d6d6" stroke="#5e5e5e" />
        <path d="M4.500 3.500h3l2 2v5h-5z" fill="#9a9a9a" stroke="#5e5e5e" />
      </Icon>
    </button>
    <span className="mt-2"><Caret c="border-t-[#666]" /></span>
    <button type="button" aria-label="Orbit" className="mt-1.5">
      <Icon w={17} h={17}>
        <ellipse cx="8.500" cy="8.500" rx="8" ry="3.500" stroke="#636363" />
        <ellipse cx="8.500" cy="8.500" rx="3.500" ry="8" stroke="#636363" />
      </Icon>
    </button>
    <span className="mt-1.5"><Caret c="border-t-[#666]" /></span>
    <button type="button" aria-label="Look at" className="mt-1.5">
      <Icon w={16} h={15}>
        <path d="M.5 4.500h15v10H.5z" fill="#d0d0d0" stroke="#666" />
        <path d="M3.500 7.500h9v4h-9z" fill="#999" stroke="#666" />
        <path d="M4 3l7-2" stroke="#666" />
      </Icon>
    </button>
    <button type="button" aria-label="Navigation bar options" className="mb-0.5 mr-0.5 mt-auto self-end">
      <Icon w={9} h={9}><circle cx="4.500" cy="4.500" r="4" fill="#5e5e5e" /><path d="M2 3h5M2 5h5l-2.500 2z" fill="#ddd" stroke="#ddd" strokeWidth=".6" /></Icon>
    </button>
  </div>
);

const DocTab = ({ label, w, active }: { label: string; w: string; active?: boolean }) => (
  <button type="button" className={"relative h-[23px] shrink-0 text-sm leading-[22px] text-black " + w}>
    <svg viewBox="0 0 100 22" preserveAspectRatio="none" className="absolute inset-0 h-full w-full" fill="none" aria-hidden="true">
      <path d="M0 0V17L4 21.500H96L100 17V0" fill={active ? "#fff" : "#cdcdcd"} stroke="#444" vectorEffect="non-scaling-stroke" />
    </svg>
    <span className="relative flex items-start justify-center gap-2">
      {label}
      {active && (
        <span className="flex pt-1"><Icon w={10} h={10}><path d="M1 1h3l1 2 1-2h3L7 5l2 4H6L5 7 4 9H1l2-4z" fill="#eee" stroke="#777" /></Icon></span>
      )}
    </span>
  </button>
);

function Workspace() {
  return (
    <div className="flex min-w-0 flex-1 flex-col">
      <div className="relative min-h-0 flex-1 overflow-hidden border-r border-[#888] bg-linear-to-b from-[#303030] via-[#6b6b6b] to-[#a3a3a3]">
        <Scene />
        <div className="absolute right-0.5 top-1.5 flex items-center gap-2">
          <button type="button" aria-label="Minimize document" className="flex h-3 w-3 items-end"><span className="h-1 w-3 bg-white" /></button>
          <button type="button" aria-label="Restore document"><Icon w={12} h={12}><path d="M4 1h7v7M2 4h6v6H2z" stroke="#fff" strokeWidth="2" /></Icon></button>
          <button type="button" aria-label="Close document"><Icon w={12} h={12}><path d="M2 1l8 9M10 1l-8 9" stroke="#fff" strokeWidth="3" /></Icon></button>
        </div>
        <ViewCube />
        <NavBar />
      </div>
      <div className="flex h-[29px] shrink-0 items-start border-b-2 border-t-2 border-b-black border-t-[#f5f5f5] bg-linear-to-b from-[#dcdcdc] to-[#b2b2b2]">
        <button type="button" aria-label="Cascade" className="flex h-full w-[24px] items-center justify-center border border-[#555] bg-[#c4c4c4]">
          <Icon w={20} h={20}>
            <path d="M1.500 1.500h12v10h-12zM4.500 5.500h12v9h-12zM7.500 9.500h11v9h-11z" fill="#eee" stroke="#444" strokeWidth="1.500" />
            <path d="M1 2h13M4 6h13M7 10h12" stroke="#444" strokeWidth="2" />
          </Icon>
        </button>
        <button type="button" aria-label="Tile" className="flex h-full w-[25px] items-center justify-center border border-[#555] bg-[#c4c4c4]">
          <Icon w={20} h={18}>
            <path d="M1.500 2h7v5h-7zM11.500 2h7v5h-7zM1.500 11h7v5h-7zM11.500 11h7v5h-7z" fill="#eee" stroke="#444" strokeWidth="1.500" />
          </Icon>
        </button>
        <button type="button" aria-label="More documents" className="flex h-full w-[24px] items-start justify-center border border-[#555] bg-linear-to-b from-[#eee] to-[#c4c4c4] pt-1">
          <Icon w={12} h={8}><path d="M0 7l6-7 6 7z" fill="#333" /></Icon>
        </button>
        <DocTab label="TANK.iam" w="w-[90px]" />
        <DocTab label="PLASTIC_TANK.iam" w="w-[150px]" />
        <DocTab label="STEEL_FRAME.iam" w="w-[143px]" />
        <DocTab label="REF_SKETCH.ipt" w="w-[142px]" active />
      </div>
    </div>
  );
}

const Note = ({ cls, children }: P & { cls: string }) => (
  <p className={"absolute w-[230px] font-[Lato,sans-serif] text-[21px] font-black leading-7 text-[#dc2430] " + cls}>{children}</p>
);

/* ---------- Taskbar ---------- */
const Task = ({ label, on, stack, children }: P & { label: string; on?: boolean; stack?: boolean }) => (
  <button
    type="button"
    aria-label={label}
    className={
      "mr-1 flex h-[46px] w-[66px] items-center justify-center rounded-sm border " +
      (on
        ? "border-[#dfe3e5] bg-linear-to-b from-[#b5bbbe] to-[#d5d5d5]"
        : "border-[#7f8a90] bg-linear-to-br from-[#66737a] via-[#36444b] to-[#27343b]") +
      (stack ? " border-r-4 border-double" : "")
    }
  >
    {children}
  </button>
);

function Taskbar() {
  return (
    <footer className="flex h-12 shrink-0 items-center border-t border-[#5b676d] bg-linear-to-r from-[#10181c] via-[#1d3540] to-[#0f171b] text-white">
      <button type="button" aria-label="Start" className="mr-[5px] flex w-[67px] justify-center">
        <Icon w={44} h={44} box="0 0 46 46">
          <circle cx="23" cy="23" r="21.500" fill="url(#orb)" stroke="#9fb6c8" strokeWidth="1.500" />
          <ellipse cx="23" cy="12" rx="16" ry="9" fill="#fff" opacity=".3" />
          <path d="M13 14c3-2 6-2 9 0l-2 8c-3-2-6-2-9 0z" fill="#ee5a26" />
          <path d="M24 15c3 2 6 2 9 0l-2 8c-3 2-6 2-9 0z" fill="#86c440" />
          <path d="M10 24c3-2 6-2 9 0l-2 8c-3-2-6-2-9 0z" fill="#38a5e8" />
          <path d="M21 25c3 2 6 2 9 0l-2 8c-3 2-6 2-9 0z" fill="#fbc716" />
        </Icon>
      </button>
      <Task label="Internet Explorer" stack>
        <Icon w={40} h={40}>
          <path d="M20 6c-9 0-14 7-14 14s5 15 14 15c7 0 12-4 13-10h-8c-1 2-3 3-5 3-3 0-6-2-6-6h20C35 12 29 6 20 6zm-6 11c0-3 3-5 6-5s5 2 6 5z" fill="#4cc3f1" stroke="#1b7fc0" />
          <path d="M35 3c-6-3-20 5-28 17C0 31 2 38 10 35c-5 0-5-6 1-15C19 9 30 3 35 3z" fill="#f6c62e" stroke="#c58b0e" strokeWidth=".6" />
          <path d="M35 3c3 2 2 6 0 10 0-3 0-5-2-7" fill="#f6c62e" />
        </Icon>
      </Task>
      <Task label="Explorer" stack>
        <Icon w={42} h={40}>
          <path d="M3 36V8l5-5h12l3 4h14v29z" fill="url(#folder)" stroke="#b98c28" />
          <path d="M10 3h8v6h-8zM22 6h10v4H22z" fill="#f2f0e2" stroke="#a98c4a" strokeWidth=".6" />
          <path d="M3 12h35v24H3z" fill="url(#folder)" />
          <path d="M7 38V25c0-3 3-3 3-3h21s3 0 3 3v13h-7v-8H14v8z" fill="#8fd0ee" stroke="#3d8fb8" />
        </Icon>
      </Task>
      <Task label="Skype">
        <Icon w={40} h={40}>
          <path d="M12 2c3 0 4 1 6 2 10-1 18 6 18 16l-1 4c4 7-1 14-8 14-3 0-5-1-7-2C10 37 3 29 4 19l1-3C1 10 5 2 12 2z" fill="#12a5e8" />
          <path d="M26 14c-1-3-3-4-6-4-4 0-6 2-6 5 0 6 12 4 12 10 0 3-3 5-6 5-4 0-6-2-6-4" stroke="#fff" strokeWidth="4" strokeLinecap="round" />
        </Icon>
      </Task>
      <Task label="Writer">
        <Icon w={42} h={42}>
          <path d="M7 4v36h30V14L27 4z" fill="#f4f7fa" stroke="#1d3a52" />
          <path d="M7 4h7v36H7z" fill="#163a56" />
          <path d="M27 4v10h10z" fill="#9db4c4" stroke="#1d3a52" />
          <path d="M18 22h16M18 28h11M18 34h16" stroke="#274f78" strokeWidth="2" />
          <path d="M3 9c5-5 9-4 12 0 4-6 9-7 14-5-6 1-9 4-12 9-4-4-8-5-14-4zM2 17c5-4 9-3 12 0 4-6 9-7 13-5-5 1-8 4-11 8-4-3-8-4-14-3z" fill="#fff" stroke="#333" strokeWidth=".8" />
        </Icon>
      </Task>
      <Task label="Photo viewer">
        <Icon w={38} h={34}>
          <path d="M2 8V2h6M30 2h6v6M36 26v6h-6M8 32H2v-6" stroke="#3b90d8" strokeWidth="3" />
          <rect x="4" y="4" width="30" height="26" fill="url(#sky)" stroke="#d5ecfa" />
          <path d="M5 15c4 1 7 4 12 4 6 0 9-3 16-3v6H5z" fill="#2c6a50" />
          <path d="M5 21h28v8H5z" fill="#2a7db0" />
          <path d="M14 9c3-2 8-2 12 1" stroke="#fff" strokeWidth="2" opacity=".8" />
        </Icon>
      </Task>
      <Task label="Chrome">
        <Icon w={38} h={38}>
          <circle cx="19" cy="19" r="17" fill="#f9cf2e" />
          <path d="M19 19L4.300 10.500A17 17 0 0 1 33.700 10.500H19z" fill="#dc3a2c" />
          <path d="M19 19l-14.700-8.500A17 17 0 0 0 18 36l7-13z" fill="#3aa650" />
          <circle cx="19" cy="19" r="8" fill="#fff" />
          <circle cx="19" cy="19" r="6.500" fill="#3f80d8" />
        </Icon>
      </Task>
      <Task label="Inventor" on>
        <span className="flex h-10 w-10 items-center justify-center bg-linear-to-b from-[#fdf3ec] to-[#eec6ab]"><ILogo w={18} h={30} /></span>
      </Task>
      <div className="ml-auto flex h-full items-stretch text-sm">
        <button type="button" aria-label="Connection" className="flex w-[70px] items-center justify-center rounded-tl-2xl border-l border-t border-[#8a9498] bg-[#2b363b]">
          <Icon w={40} h={40}>
            <circle cx="19" cy="21" r="17" fill="url(#red)" />
            <path d="M10 13h8v8h-9zM20 13h8l1 8h-9zM8 23h10v7H7zM20 23h9l2 7H20z" fill="#f6f6f6" />
            <circle cx="29" cy="11" r="9" fill="#ef7426" stroke="#f7c0a0" />
            <path d="M25 7l8 8M33 7l-8 8" stroke="#fff" strokeWidth="3.500" />
          </Icon>
        </button>
        <button type="button" className="w-9 pr-1 text-sm">CS</button>
        <button type="button" aria-label="Battery time" className="flex w-[84px] items-center justify-center rounded-tl-2xl border-l border-t border-[#8a9498] bg-[#1d282d]">
          <span className="flex h-[25px] w-[55px] items-center justify-center border-2 border-white bg-linear-to-r from-[#0f9a40] from-70% to-black to-70% text-sm">(1:14)</span>
          <span className="h-3 w-[3px] border border-l-0 border-white" />
        </button>
        <div className="flex items-center">
          <button type="button" aria-label="Show hidden icons" className="flex w-8 justify-center"><Icon w={10} h={6}><path d="M0 6l5-6 5 6z" fill="#fff" /></Icon></button>
          <button type="button" aria-label="Power" className="flex w-8 justify-center">
            <Icon w={12} h={18}><path d="M4 0h4v2H4z" fill="#fff" /><rect x="1" y="2.500" width="10" height="15" rx="1.500" stroke="#fff" strokeWidth="1.500" /><path d="M3 7h6v9H3z" fill="#fff" /></Icon>
          </button>
          <button type="button" aria-label="Volume" className="flex w-7 justify-center">
            <Icon w={20} h={20}><path d="M1 7h3l6-6v17l-6-5H1z" fill="#eee" /><circle cx="13" cy="14" r="4.500" fill="#c81414" stroke="#fff" /><path d="M10.500 11.500l5 5" stroke="#fff" strokeWidth="1.500" /></Icon>
          </button>
          <button type="button" aria-label="Network" className="flex w-[34px] justify-center">
            <Icon w={15} h={14}><path d="M1 14v-3M4 14V9M7 14V7M10 14V4M13.500 14V1" stroke="#fff" strokeWidth="2" /></Icon>
          </button>
          <button type="button" aria-label="Action center" className="flex w-7 justify-center">
            <Icon w={18} h={18}><path d="M1.500 0v18" stroke="#fff" /><path d="M3 1c3-1 5 0 7 1v3c2 1 4 1 7 0l-2 6c-2 1-4 0-5-2H3z" fill="#fff" /></Icon>
          </button>
        </div>
        <button type="button" className="w-[84px] pl-1 leading-[22px]">
          18:18
          <br />
          3.12.2014
        </button>
        <button type="button" aria-label="Show desktop" className="w-3.5 border border-[#6f7a80] bg-linear-to-b from-[#4a565c] to-[#1a2226]" />
      </div>
    </footer>
  );
}

export default function App() {
  return (
    <div className="flex h-screen w-full flex-col overflow-hidden bg-[#f0f0f0] font-['Open_Sans',sans-serif]">
      <Defs />
      <TitleBar />
      <RibbonTabs />
      <Ribbon />
      <main className="relative flex min-h-0 flex-1">
        <Browser />
        <Workspace />
        <div className="pointer-events-none absolute left-px top-[152px] h-36 w-[184px] border-[3px] border-[#dc2430]" />
        <div className="pointer-events-none absolute left-px top-[293px] h-[324px] w-[206px] border-[3px] border-[#dc2430]" />
        <Note cls="left-[195px] top-[152px]">Ref.features for plastic tank.</Note>
        <Note cls="left-[223px] top-[308px]">Ref.features for steel frame.</Note>
      </main>
      <div className="flex h-[29px] shrink-0 items-stretch bg-linear-to-b from-white to-[#b5b5b5] pt-0.5 text-sm text-[#222]">
        <span className="flex flex-1 items-center">For Help, press F1</span>
        <span className="flex w-10 items-center border-l border-[#ccc] pl-2.5">1</span>
        <span className="flex w-[38px] items-center border-l border-[#ccc] pl-2">120</span>
      </div>
      <Taskbar />
    </div>
  );
}
